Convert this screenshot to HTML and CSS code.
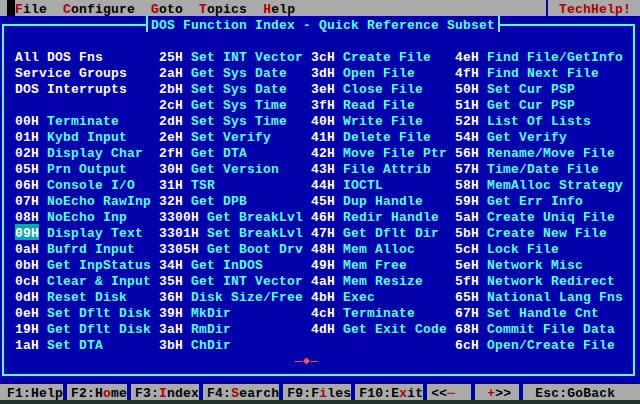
FILE: index.html
```html
<!DOCTYPE html>
<html>
<head>
<meta charset="utf-8">
<title>TechHelp! - DOS Function Index</title>
<link rel="stylesheet" href="styles.css">
</head>
<body>
<div class="screen">
  <div class="menubar">
    <span class="cursor"></span>
    <nav class="menu">
      <span><span class="hk">F</span>ile</span>
      <span><span class="hk">C</span>onfigure</span>
      <span><span class="hk">G</span>oto</span>
      <span><span class="hk">T</span>opics</span>
      <span><span class="hk">H</span>elp</span>
    </nav>
    <div class="brand"><span class="brand-bar"></span><span class="brand-text">TechHelp!</span></div>
  </div>

  <div class="main">
    <div class="box">
      <div class="title">DOS Function Index - Quick Reference Subset</div>
      <div class="grid">
        <div class="cell"><span class="c">All DOS Fns</span></div>
        <div class="cell"><span class="c">25H</span> <span class="n">Set INT Vector</span></div>
        <div class="cell"><span class="c">3cH</span> <span class="n">Create File</span></div>
        <div class="cell"><span class="c">4eH</span> <span class="n">Find File/GetInfo</span></div>

        <div class="cell"><span class="c">Service Groups</span></div>
        <div class="cell"><span class="c">2aH</span> <span class="n">Get Sys Date</span></div>
        <div class="cell"><span class="c">3dH</span> <span class="n">Open File</span></div>
        <div class="cell"><span class="c">4fH</span> <span class="n">Find Next File</span></div>

        <div class="cell"><span class="c">DOS Interrupts</span></div>
        <div class="cell"><span class="c">2bH</span> <span class="n">Set Sys Date</span></div>
        <div class="cell"><span class="c">3eH</span> <span class="n">Close File</span></div>
        <div class="cell"><span class="c">50H</span> <span class="n">Set Cur PSP</span></div>

        <div class="cell"></div>
        <div class="cell"><span class="c">2cH</span> <span class="n">Get Sys Time</span></div>
        <div class="cell"><span class="c">3fH</span> <span class="n">Read File</span></div>
        <div class="cell"><span class="c">51H</span> <span class="n">Get Cur PSP</span></div>

        <div class="cell"><span class="c">00H</span> <span class="n">Terminate</span></div>
        <div class="cell"><span class="c">2dH</span> <span class="n">Set Sys Time</span></div>
        <div class="cell"><span class="c">40H</span> <span class="n">Write File</span></div>
        <div class="cell"><span class="c">52H</span> <span class="n">List Of Lists</span></div>

        <div class="cell"><span class="c">01H</span> <span class="n">Kybd Input</span></div>
        <div class="cell"><span class="c">2eH</span> <span class="n">Set Verify</span></div>
        <div class="cell"><span class="c">41H</span> <span class="n">Delete File</span></div>
        <div class="cell"><span class="c">54H</span> <span class="n">Get Verify</span></div>

        <div class="cell"><span class="c">02H</span> <span class="n">Display Char</span></div>
        <div class="cell"><span class="c">2fH</span> <span class="n">Get DTA</span></div>
        <div class="cell"><span class="c">42H</span> <span class="n">Move File Ptr</span></div>
        <div class="cell"><span class="c">56H</span> <span class="n">Rename/Move File</span></div>

        <div class="cell"><span class="c">05H</span> <span class="n">Prn Output</span></div>
        <div class="cell"><span class="c">30H</span> <span class="n">Get Version</span></div>
        <div class="cell"><span class="c">43H</span> <span class="n">File Attrib</span></div>
        <div class="cell"><span class="c">57H</span> <span class="n">Time/Date File</span></div>

        <div class="cell"><span class="c">06H</span> <span class="n">Console I/O</span></div>
        <div class="cell"><span class="c">31H</span> <span class="n">TSR</span></div>
        <div class="cell"><span class="c">44H</span> <span class="n">IOCTL</span></div>
        <div class="cell"><span class="c">58H</span> <span class="n">MemAlloc Strategy</span></div>

        <div class="cell"><span class="c">07H</span> <span class="n">NoEcho RawInp</span></div>
        <div class="cell"><span class="c">32H</span> <span class="n">Get DPB</span></div>
        <div class="cell"><span class="c">45H</span> <span class="n">Dup Handle</span></div>
        <div class="cell"><span class="c">59H</span> <span class="n">Get Err Info</span></div>

        <div class="cell"><span class="c">08H</span> <span class="n">NoEcho Inp</span></div>
        <div class="cell"><span class="c">3300H</span> <span class="n">Get BreakLvl</span></div>
        <div class="cell"><span class="c">46H</span> <span class="n">Redir Handle</span></div>
        <div class="cell"><span class="c">5aH</span> <span class="n">Create Uniq File</span></div>

        <div class="cell"><span class="c sel">09H</span> <span class="n">Display Text</span></div>
        <div class="cell"><span class="c">3301H</span> <span class="n">Set BreakLvl</span></div>
        <div class="cell"><span class="c">47H</span> <span class="n">Get Dflt Dir</span></div>
        <div class="cell"><span class="c">5bH</span> <span class="n">Create New File</span></div>

        <div class="cell"><span class="c">0aH</span> <span class="n">Bufrd Input</span></div>
        <div class="cell"><span class="c">3305H</span> <span class="n">Get Boot Drv</span></div>
        <div class="cell"><span class="c">48H</span> <span class="n">Mem Alloc</span></div>
        <div class="cell"><span class="c">5cH</span> <span class="n">Lock File</span></div>

        <div class="cell"><span class="c">0bH</span> <span class="n">Get InpStatus</span></div>
        <div class="cell"><span class="c">34H</span> <span class="n">Get InDOS</span></div>
        <div class="cell"><span class="c">49H</span> <span class="n">Mem Free</span></div>
        <div class="cell"><span class="c">5eH</span> <span class="n">Network Misc</span></div>

        <div class="cell"><span class="c">0cH</span> <span class="n">Clear &amp; Input</span></div>
        <div class="cell"><span class="c">35H</span> <span class="n">Get INT Vector</span></div>
        <div class="cell"><span class="c">4aH</span> <span class="n">Mem Resize</span></div>
        <div class="cell"><span class="c">5fH</span> <span class="n">Network Redirect</span></div>

        <div class="cell"><span class="c">0dH</span> <span class="n">Reset Disk</span></div>
        <div class="cell"><span class="c">36H</span> <span class="n">Disk Size/Free</span></div>
        <div class="cell"><span class="c">4bH</span> <span class="n">Exec</span></div>
        <div class="cell"><span class="c">65H</span> <span class="n">National Lang Fns</span></div>

        <div class="cell"><span class="c">0eH</span> <span class="n">Set Dflt Disk</span></div>
        <div class="cell"><span class="c">39H</span> <span class="n">MkDir</span></div>
        <div class="cell"><span class="c">4cH</span> <span class="n">Terminate</span></div>
        <div class="cell"><span class="c">67H</span> <span class="n">Set Handle Cnt</span></div>

        <div class="cell"><span class="c">19H</span> <span class="n">Get Dflt Disk</span></div>
        <div class="cell"><span class="c">3aH</span> <span class="n">RmDir</span></div>
        <div class="cell"><span class="c">4dH</span> <span class="n">Get Exit Code</span></div>
        <div class="cell"><span class="c">68H</span> <span class="n">Commit File Data</span></div>

        <div class="cell"><span class="c">1aH</span> <span class="n">Set DTA</span></div>
        <div class="cell"><span class="c">3bH</span> <span class="n">ChDir</span></div>
        <div class="cell"></div>
        <div class="cell"><span class="c">6cH</span> <span class="n">Open/Create File</span></div>
      </div>
      <div class="marker">
        <svg width="24" height="16" viewBox="0 0 24 16">
          <rect x="0" y="9" width="7" height="1" fill="#ff5555"/>
          <rect x="16" y="9" width="7" height="1" fill="#ff5555"/>
          <polygon points="11.5,5.5 15,9 11.5,12.5 8,9" fill="#ff5555"/>
        </svg>
      </div>
    </div>
  </div>

  <div class="status">
    <span class="key">F1:Help</span><span class="sep"></span>
    <span class="key">F2:H<span class="hk">o</span>me</span><span class="sep"></span>
    <span class="key">F3:<span class="hk">I</span>ndex</span><span class="sep"></span>
    <span class="key">F4:<span class="hk">S</span>earch</span><span class="sep"></span>
    <span class="key">F9:F<span class="hk">i</span>les</span><span class="sep"></span>
    <span class="key">F10:E<span class="hk">x</span>it</span><span class="sep"></span>
    <span class="key">&lt;&lt;<span class="hk">─</span>  </span><span class="sep"></span>
    <span class="key"> <span class="hk">+</span>&gt;&gt; </span><span class="sep"></span>
    <span class="key"> Esc:GoBack</span>
  </div>
</div>
</body>
</html>
```

FILE: styles.css
```css
html, body {
  margin: 0;
  padding: 0;
  background: #25332c;
}

.screen {
  width: 640px;
  font-family: "Liberation Mono", "DejaVu Sans Mono", monospace;
  font-weight: bold;
  font-size: 13px;
  letter-spacing: 0.2px;
  line-height: 20px;
}

/* top menu bar */
.menubar {
  display: flex;
  height: 16px;
  background: #aaaaaa;
  color: #000000;
  padding-left: 7px;
}

.cursor {
  width: 8px;
  height: 16px;
  background: #000000;
}

.menu {
  display: flex;
  gap: 16px;
  height: 16px;
}

.menu > span {
  white-space: pre;
}

.hk {
  color: #aa0000;
}

.brand {
  margin-left: auto;
  display: flex;
  height: 16px;
  padding-right: 9px;
}

.brand-bar {
  width: 2px;
  height: 16px;
  background: #0000aa;
  margin-right: 11px;
}

.brand-text {
  color: #aa0000;
  white-space: pre;
}

/* main blue window */
.main {
  height: 368px;
  box-sizing: border-box;
  background: #0000aa;
  padding-top: 8px;
  padding-left: 2px;
}

.box {
  position: relative;
  width: 633px;
  height: 352px;
  box-sizing: border-box;
  border: 2px solid #55ffff;
  padding: 22px 0 0 11px;
}

.title {
  position: absolute;
  top: -10px;
  left: 142px;
  height: 16px;
  padding: 0 3px;
  background: #0000aa;
  border-left: 2px solid #55ffff;
  border-right: 2px solid #55ffff;
  color: #55ffff;
  white-space: pre;
}

.grid {
  display: grid;
  grid-template-columns: 144px 152px 144px auto;
  grid-auto-rows: 16px;
}

.cell {
  height: 16px;
  white-space: pre;
}

.c {
  color: #ffffff;
}

.n {
  color: #55ffff;
}

.sel {
  display: inline-block;
  vertical-align: top;
  height: 16px;
  background: #00aaaa;
}

.marker {
  height: 16px;
  padding-left: 280px;
}

.marker svg {
  display: block;
}

/* bottom status bar */
.status {
  display: flex;
  height: 16px;
  background: #aaaaaa;
  color: #000000;
  padding-left: 7px;
}

.key {
  white-space: pre;
  height: 16px;
}

.sep {
  width: 4px;
  height: 16px;
  background: #0000aa;
  margin-right: 4px;
}
```
